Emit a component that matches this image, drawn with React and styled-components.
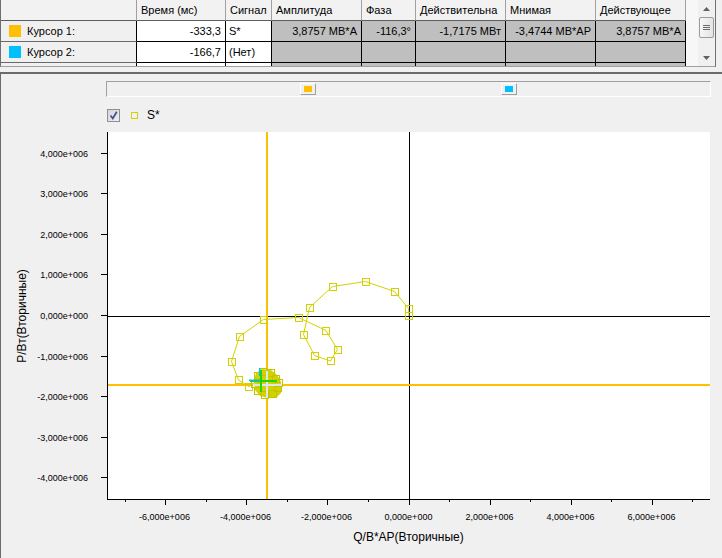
import styled, { createGlobalStyle } from "styled-components";

const GlobalStyle = createGlobalStyle`
  *, *::before, *::after { box-sizing: border-box; }
  html, body { margin: 0; padding: 0; background: #f0f0f0; }
  body { font-family: "Liberation Sans", Arial, sans-serif; color: #000; }
`;

const COLUMNS = [
  { title: "", width: 136 },
  { title: "Время (мс)", width: 89, align: "right", white: true },
  { title: "Сигнал", width: 46, align: "left", white: true },
  { title: "Амплитуда", width: 90, align: "right" },
  { title: "Фаза", width: 54, align: "right" },
  { title: "Действительна", width: 90, align: "right" },
  { title: "Мнимая", width: 90, align: "right" },
  { title: "Действующее", width: 90, align: "right" },
];

const CURSORS = [
  {
    name: "Курсор 1:",
    color: "#ffc000",
    values: ["-333,3", "S*", "3,8757 МВ*А", "-116,3°", "-1,7175 МВт", "-3,4744 МВ*АР", "3,8757 МВ*А"],
  },
  { name: "Курсор 2:", color: "#00bfff", values: ["-166,7", "(Нет)", "", "", "", "", ""] },
  { name: "", color: null, values: ["", "", "", "", "", "", ""] },
];

// trajectory of S* in page pixels
const CURVE = [
  [409, 316], [408.5, 308.5], [394.5, 291.5], [365.5, 281.5], [332.5, 286.5],
  [309.5, 307.5], [303.5, 334.5], [314.5, 355.5], [330.5, 361], [337.5, 349.5],
  [326, 330.5], [298.5, 317.5], [263.5, 319.5], [239.5, 336.5], [231.5, 361.5],
  [238.5, 380], [249, 386.5], [258, 380], [264, 375],
];

const CLUSTER = [
  [258, 376], [263, 372], [271, 373], [276, 379], [278, 388], [273, 394],
  [265, 395], [258, 391], [255, 384], [279, 383],
];

const X0 = 409;
const Y0 = 315.5;
const K = 40.55;
const px = (v) => Math.floor(X0 + K * v) + 0.5;
const py = (v) => Math.floor(Y0 - K * v) + 0.5;

const fmt = (v) => (v === 0 ? "0,000e+000" : `${v},000e+006`);

const YTICKS = [4, 3, 2, 1, 0, -1, -2, -3, -4];
const XMAJOR = [-6, -4, -2, 0, 2, 4, 6];
const XMINOR = [-7, -5, -3, -1, 1, 3, 5, 7];

const CURVE_COLOR = "#d2d200";
const CURSOR1 = "#ffc000";

export default function App() {
  return (
    <Window>
      <GlobalStyle />
      <GridPane>
        <GridBody>
          <HeaderRow>
            {COLUMNS.map((c, i) => (
              <HeadCell key={i} $width={c.width}>
                {c.title}
              </HeadCell>
            ))}
          </HeaderRow>
          {CURSORS.map((r, i) => (
            <DataRow key={i}>
              <RowHead>
                {r.color && <Swatch $color={r.color} />}
                {r.name}
              </RowHead>
              {r.values.map((v, j) => {
                const col = COLUMNS[j + 1];
                return (
                  <Cell key={j} $width={col.width} $align={col.align} $white={col.white}>
                    {v}
                  </Cell>
                );
              })}
            </DataRow>
          ))}
        </GridBody>
        <VScroll>
          <ScrollArrow>
            <svg width="7" height="4" viewBox="0 0 7 4">
              <path d="M0 4 L3.5 0 L7 4 Z" fill="#606060" />
            </svg>
          </ScrollArrow>
          <ScrollThumb>
            <Grip />
          </ScrollThumb>
          <ScrollGap />
          <ScrollArrow>
            <svg width="7" height="4" viewBox="0 0 7 4">
              <path d="M0 0 L3.5 4 L7 0 Z" fill="#606060" />
            </svg>
          </ScrollArrow>
        </VScroll>
      </GridPane>

      <PlotPanel>
        <SliderTrack>
          <SliderThumb style={{ left: 193 }}>
            <ThumbMark $color={CURSOR1} />
          </SliderThumb>
          <SliderThumb style={{ left: 394 }}>
            <ThumbMark $color="#00bfff" />
          </SliderThumb>
        </SliderTrack>

        <Legend>
          <CheckBox>
            <svg width="11" height="11" viewBox="0 0 11 11">
              <path d="M2.5 5.5 L4.8 8.5 L8.8 1.8" fill="none" stroke="#3f4f8c" strokeWidth="1.7" />
            </svg>
          </CheckBox>
          <LegendMark />
          <LegendLabel>S*</LegendLabel>
        </Legend>

        <ChartSvg width="721" height="436" viewBox="1 122 721 436">
          <rect x="107" y="132" width="603" height="367" fill="#fff" />

          <line x1="107" y1="316.5" x2="710" y2="316.5" stroke="#000" />
          <line x1="409.5" y1="132" x2="409.5" y2="499" stroke="#000" />

          <rect x="266" y="132" width="2" height="367" fill={CURSOR1} />
          <rect x="107" y="384" width="603" height="2" fill={CURSOR1} />

          <polyline
            points={CURVE.map((p) => p.join(",")).join(" ")}
            fill="none"
            stroke={CURVE_COLOR}
            strokeWidth="1"
          />
          {CURVE.slice(0, 17).map(([x, y], i) => (
            <rect
              key={i}
              x={Math.round(x) - 3.5}
              y={Math.round(y) - 3.5}
              width="7"
              height="7"
              fill="none"
              stroke={CURVE_COLOR}
            />
          ))}

          <path
            d="M256 373 L262 369 L271 370 L276 374 L279 378 L281 382 L281 393 L277 397 L268 398 L260 396 L255 390 L254 380 Z"
            fill={CURVE_COLOR}
          />
          {CLUSTER.map(([x, y], i) => (
            <rect key={i} x={x - 3.5} y={y - 3.5} width="7" height="7" fill="none" stroke="#c4c400" />
          ))}
          <rect x="266" y="371" width="2" height="27" fill="#dde8ee" />
          <rect x="253" y="384" width="29" height="2" fill="#dde8ee" />
          <rect x="260" y="370" width="2" height="22" fill="#22d400" />
          <rect x="250" y="380" width="27" height="2" fill="#22d400" />
          <rect x="259" y="368" width="1.5" height="8" fill="#00bfff" />
          <rect x="249" y="379.5" width="11" height="1.5" fill="#00bfff" />

          <line x1="107.5" y1="132" x2="107.5" y2="500" stroke="#000" />
          <line x1="107" y1="499.5" x2="710" y2="499.5" stroke="#000" />

          {YTICKS.map((v) => (
            <g key={v}>
              <line x1="101" y1={py(v)} x2="107" y2={py(v)} stroke="#000" />
              <AxisText x="88" y={py(v) + 3.2} textAnchor="end">
                {fmt(v)}
              </AxisText>
            </g>
          ))}
          {XMAJOR.map((v) => (
            <g key={v}>
              <line x1={px(v)} y1="499" x2={px(v)} y2="505" stroke="#000" />
              <AxisText x={px(v) - 1} y="519.5" textAnchor="middle">
                {fmt(v)}
              </AxisText>
            </g>
          ))}
          {XMINOR.map((v) => (
            <line key={v} x1={px(v)} y1="499" x2={px(v)} y2="502" stroke="#000" />
          ))}

          <TitleText x="408.5" y="540.5" textAnchor="middle">
            Q/B*AP(Вторичные)
          </TitleText>
          <TitleText transform="translate(25.5 316) rotate(-90)" textAnchor="middle">
            P/Вт(Вторичные)
          </TitleText>
        </ChartSvg>
      </PlotPanel>
    </Window>
  );
}

const Window = styled.div`
  width: 722px;
  height: 558px;
  overflow: hidden;
  display: flex;
  flex-direction: column;
  background: #f0f0f0;
`;

const GridPane = styled.div`
  width: 716px;
  height: 67px;
  flex: none;
  display: flex;
  border-left: 1px solid #6f6f6f;
  border-right: 1px solid #6f6f6f;
  border-bottom: 1px solid #a0a0a0;
`;

const GridBody = styled.div`
  flex: 1;
  overflow: hidden;
  background: #f7f7f7;
  font-size: 11px;
`;

const HeaderRow = styled.div`
  display: flex;
  height: 21px;
`;

const HeadCell = styled.div`
  width: ${(p) => p.$width}px;
  flex: none;
  height: 21px;
  padding: 0 4px;
  line-height: 20px;
  white-space: nowrap;
  overflow: hidden;
  background: #f2f2f2;
  border-right: 1px solid #a0a0a0;
  border-bottom: 1px solid #5e5e5e;
`;

const DataRow = styled.div`
  display: flex;
  height: 21px;
`;

const RowHead = styled.div`
  width: 136px;
  flex: none;
  height: 21px;
  display: flex;
  align-items: center;
  gap: 6px;
  padding-left: 8px;
  background: #f0f0f0;
  border-right: 1px solid #000;
  border-bottom: 1px solid #6a6a6a;
`;

const Swatch = styled.span`
  width: 12px;
  height: 12px;
  background: ${(p) => p.$color};
  flex: none;
`;

const Cell = styled.div`
  width: ${(p) => p.$width}px;
  flex: none;
  height: 21px;
  padding: 0 4px 0 3px;
  line-height: 20px;
  white-space: nowrap;
  overflow: hidden;
  text-align: ${(p) => p.$align};
  background: ${(p) => (p.$white ? "#fff" : "#bfbfbf")};
  border-right: 1px solid #000;
  border-bottom: 1px solid #000;
`;

const VScroll = styled.div`
  width: 17px;
  flex: none;
  display: flex;
  flex-direction: column;
  background: #f0f0f0;
`;

const ScrollArrow = styled.div`
  height: 17px;
  display: flex;
  align-items: center;
  justify-content: center;
`;

const ScrollThumb = styled.div`
  height: 21px;
  margin: 0 1px;
  border: 1px solid #9c9c9c;
  border-radius: 2px;
  background: linear-gradient(90deg, #f6f6f6, #e4e4e4);
  display: flex;
  align-items: center;
  justify-content: center;
`;

const Grip = styled.span`
  width: 7px;
  height: 5px;
  background: repeating-linear-gradient(to bottom, #6c6c6c 0 1px, transparent 1px 2px);
`;

const ScrollGap = styled.div`
  flex: 1;
`;

const PlotPanel = styled.div`
  margin-top: 5px;
  flex: 1;
  display: flex;
  flex-direction: column;
  border-top: 2px solid #6b6b6b;
  border-left: 1px solid #6b6b6b;
`;

const SliderTrack = styled.div`
  position: relative;
  margin: 7px 0 0 105px;
  width: 605px;
  height: 16px;
  flex: none;
  background: #f0f0f0;
  border-top: 1px solid #a0a0a0;
  border-left: 1px solid #a0a0a0;
  border-bottom: 1px solid #fff;
  border-right: 1px solid #fff;
`;

const SliderThumb = styled.div`
  position: absolute;
  top: 1px;
  width: 16px;
  height: 12px;
  background: #f0f0f0;
  border: 1px solid;
  border-color: #fff #a0a0a0 #a0a0a0 #fff;
  display: flex;
  align-items: center;
  justify-content: center;
`;

const ThumbMark = styled.span`
  width: 8px;
  height: 6px;
  background: ${(p) => p.$color};
`;

const Legend = styled.div`
  margin-top: 12px;
  padding-left: 106px;
  height: 13px;
  flex: none;
  display: flex;
  align-items: center;
`;

const CheckBox = styled.span`
  width: 13px;
  height: 13px;
  border: 1px solid #8e8f8f;
  background: linear-gradient(135deg, #d4d6dc, #eeeeee);
  display: flex;
  align-items: center;
  justify-content: center;
`;

const LegendMark = styled.span`
  width: 7px;
  height: 7px;
  margin-left: 11px;
  border: 1px solid ${CURVE_COLOR};
`;

const LegendLabel = styled.span`
  margin-left: 9px;
  font-size: 12px;
  line-height: 13px;
`;

const ChartSvg = styled.svg`
  display: block;
  flex: none;
`;

const AxisText = styled.text`
  font-family: "Liberation Sans", Arial, sans-serif;
  font-size: 9px;
  fill: #000;
`;

const TitleText = styled.text`
  font-family: "Liberation Sans", Arial, sans-serif;
  font-size: 12px;
  fill: #000;
`;
